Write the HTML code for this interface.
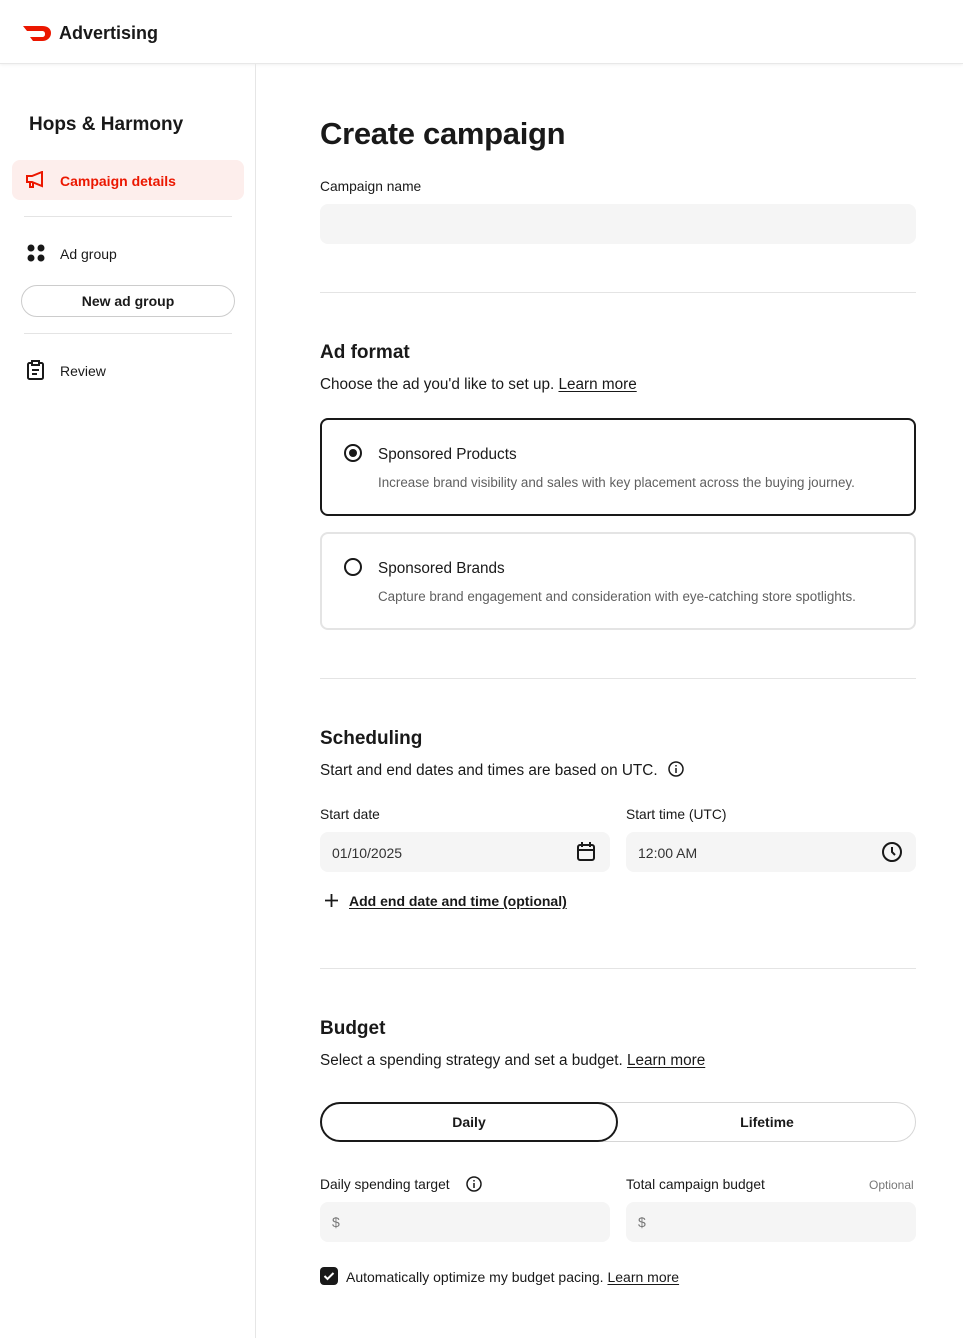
<!DOCTYPE html>
<html><head><meta charset="utf-8"><style>
*{box-sizing:border-box;margin:0;padding:0}
body{width:963px;height:1338px;position:relative;font-family:"Liberation Sans",sans-serif;color:#191919;background:#fff;overflow:hidden}
.a{position:absolute}
.hdr{left:0;top:0;width:963px;height:64px;border-bottom:1px solid #e8e8e8;box-shadow:0 1px 3px rgba(0,0,0,.06)}
.side{left:255px;top:64px;width:1px;height:1274px;background:#e6e6e6}
.hr{height:1px;background:#e4e4e4}
.lbl{font-size:13.8px}
.inp{background:#f5f5f5;border-radius:8px}
.h2{font-size:19px;font-weight:bold}
.p{font-size:15.3px}
u{text-underline-offset:2px}
</style></head><body>
<div class="a hdr"></div>
<svg class="a" style="left:23px;top:25px" width="29" height="17" viewBox="0 0 29 17"><path d="M0 1h19c6 0 9 3 9 7s-3 8-9 8h-9l-3-4h12c2 0 3-1 3-3s-1-3-3-3H4z" fill="#eb1700"/></svg>
<div class="a" style="left:59px;top:23px;font-size:18px;font-weight:bold">Advertising</div>
<div class="a side"></div>
<div class="a" style="left:29px;top:114px;font-size:19px;font-weight:bold">Hops &amp; Harmony</div>
<div class="a" style="left:12px;top:160px;width:232px;height:40px;background:#fdeeec;border-radius:8px"></div>
<svg class="a" style="left:25px;top:171px" width="21" height="18" viewBox="0 0 21 18" fill="none" stroke="#eb1700" stroke-width="2"><path d="M2 5h5l10-4v14L7 11H2z"/><path d="M5 11v5h3v-5"/></svg>
<div class="a" style="left:60px;top:173px;font-size:14px;font-weight:bold;color:#eb1700">Campaign details</div>
<div class="a hr" style="left:24px;top:216px;width:208px"></div>
<svg class="a" style="left:27px;top:244px" width="18" height="18"><circle cx="4" cy="4" r="3.5" fill="#191919"/><circle cx="14" cy="4" r="3.5" fill="#191919"/><circle cx="4" cy="14" r="3.5" fill="#191919"/><circle cx="14" cy="14" r="3.5" fill="#191919"/></svg>
<div class="a" style="left:60px;top:246px;font-size:14px">Ad group</div>
<div class="a" style="left:21px;top:285px;width:214px;height:32px;border:1px solid #ccc;border-radius:16px;text-align:center;line-height:30px;font-size:14px;font-weight:bold">New ad group</div>
<div class="a hr" style="left:24px;top:333px;width:208px"></div>
<svg class="a" style="left:27px;top:360px" width="17" height="20" viewBox="0 0 17 20" fill="none" stroke="#191919" stroke-width="2"><rect x="1" y="3" width="15" height="16" rx="1.5"/><rect x="5" y="1" width="7" height="4" fill="#fff"/><path d="M5 10h7M5 14h5"/></svg>
<div class="a" style="left:60px;top:363px;font-size:14px">Review</div>

<div class="a" style="left:320px;top:116px;font-size:31px;font-weight:bold;letter-spacing:-.3px">Create campaign</div>
<div class="a lbl" style="left:320px;top:179px">Campaign name</div>
<div class="a inp" style="left:320px;top:204px;width:596px;height:40px"></div>
<div class="a hr" style="left:320px;top:292px;width:596px"></div>

<div class="a h2" style="left:320px;top:342px">Ad format</div>
<div class="a p" style="left:320px;top:376px">Choose the ad you'd like to set up. <u>Learn more</u></div>
<div class="a" style="left:320px;top:418px;width:596px;height:98px;border:2px solid #191919;border-radius:8px"></div>
<div class="a" style="left:344px;top:444px;width:18px;height:18px;border:2px solid #191919;border-radius:50%"><div style="margin:3px;width:8px;height:8px;background:#191919;border-radius:50%"></div></div>
<div class="a p" style="left:378px;top:446px">Sponsored Products</div>
<div class="a" style="left:378px;top:475px;font-size:13.4px;color:#606060">Increase brand visibility and sales with key placement across the buying journey.</div>
<div class="a" style="left:320px;top:532px;width:596px;height:98px;border:2px solid #e4e4e4;border-radius:8px"></div>
<div class="a" style="left:344px;top:558px;width:18px;height:18px;border:2px solid #191919;border-radius:50%"></div>
<div class="a p" style="left:378px;top:560px">Sponsored Brands</div>
<div class="a" style="left:378px;top:589px;font-size:13.4px;color:#606060">Capture brand engagement and consideration with eye-catching store spotlights.</div>
<div class="a hr" style="left:320px;top:678px;width:596px"></div>

<div class="a h2" style="left:320px;top:728px">Scheduling</div>
<div class="a p" style="left:320px;top:762px">Start and end dates and times are based on UTC.</div>
<svg class="a" style="left:668px;top:761px" width="16" height="16" fill="none" stroke="#191919" stroke-width="1.5"><circle cx="8" cy="8" r="7"/><path d="M8 7v5M8 4v1.5"/></svg>
<div class="a lbl" style="left:320px;top:807px">Start date</div>
<div class="a lbl" style="left:626px;top:807px">Start time (UTC)</div>
<div class="a inp" style="left:320px;top:832px;width:290px;height:40px"></div>
<div class="a inp" style="left:626px;top:832px;width:290px;height:40px"></div>
<div class="a" style="left:332px;top:845px;font-size:14px;color:#333">01/10/2025</div>
<div class="a" style="left:638px;top:845px;font-size:14px;color:#333">12:00 AM</div>
<svg class="a" style="left:576px;top:841px" width="20" height="21" fill="none" stroke="#191919" stroke-width="2"><rect x="2" y="4" width="16" height="15" rx="2"/><path d="M2 9h16M6 1v5M14 1v5"/></svg>
<svg class="a" style="left:881px;top:841px" width="22" height="22" fill="none" stroke="#191919" stroke-width="2"><circle cx="11" cy="11" r="9"/><path d="M11 6v5l3 3"/></svg>
<svg class="a" style="left:324px;top:893px" width="15" height="15" stroke="#191919" stroke-width="1.8"><path d="M7.5 1v13M1 7.5h13"/></svg>
<div class="a" style="left:349px;top:893px;font-size:14px;font-weight:bold"><u>Add end date and time (optional)</u></div>
<div class="a hr" style="left:320px;top:968px;width:596px"></div>

<div class="a h2" style="left:320px;top:1018px">Budget</div>
<div class="a p" style="left:320px;top:1052px">Select a spending strategy and set a budget. <u>Learn more</u></div>
<div class="a" style="left:320px;top:1102px;width:596px;height:40px;border:1px solid #d6d6d6;border-radius:20px"></div>
<div class="a" style="left:320px;top:1102px;width:298px;height:40px;border:2px solid #191919;border-radius:20px;text-align:center;line-height:36px;font-size:14px;font-weight:bold">Daily</div>
<div class="a" style="left:618px;top:1102px;width:298px;height:40px;text-align:center;line-height:40px;font-size:14px;font-weight:bold">Lifetime</div>
<div class="a lbl" style="left:320px;top:1177px">Daily spending target</div>
<svg class="a" style="left:466px;top:1176px" width="16" height="16" fill="none" stroke="#191919" stroke-width="1.5"><circle cx="8" cy="8" r="7"/><path d="M8 7v5M8 4v1.5"/></svg>
<div class="a lbl" style="left:626px;top:1177px">Total campaign budget</div>
<div class="a" style="left:869px;top:1178px;font-size:12px;color:#777">Optional</div>
<div class="a inp" style="left:320px;top:1202px;width:290px;height:40px"></div>
<div class="a inp" style="left:626px;top:1202px;width:290px;height:40px"></div>
<div class="a" style="left:332px;top:1214px;font-size:14px;color:#777">$</div>
<div class="a" style="left:638px;top:1214px;font-size:14px;color:#777">$</div>
<div class="a" style="left:320px;top:1267px;width:18px;height:18px;background:#191919;border-radius:4px"><svg width="18" height="18" fill="none" stroke="#fff" stroke-width="2"><path d="M4.5 9l3 3 6-6"/></svg></div>
<div class="a" style="left:346px;top:1269px;font-size:14px">Automatically optimize my budget pacing. <u>Learn more</u></div>
</body></html>
